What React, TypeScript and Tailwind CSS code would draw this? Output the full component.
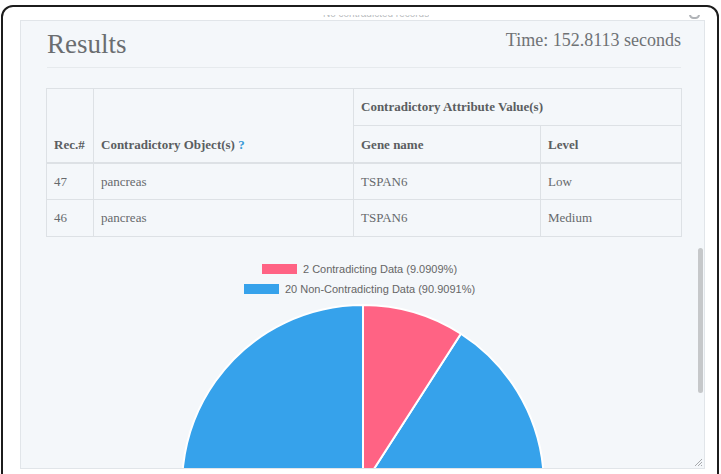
const rows = [
  { rec: '47', obj: 'pancreas', gene: 'TSPAN6', level: 'Low' },
  { rec: '46', obj: 'pancreas', gene: 'TSPAN6', level: 'Medium' },
]

const legend = [
  { color: 'bg-[#ff6384]', label: '2 Contradicting Data (9.0909%)' },
  { color: 'bg-[#36a2eb]', label: '20 Non-Contradicting Data (90.9091%)' },
]

// pie geometry, px inside the svg box
const CX = 317
const CY = 186
const R = 181
const share = 2 / 22

function slicePath(from: number, to: number) {
  const a0 = from * Math.PI * 2
  const a1 = to * Math.PI * 2
  const x0 = CX + R * Math.sin(a0)
  const y0 = CY - R * Math.cos(a0)
  const x1 = CX + R * Math.sin(a1)
  const y1 = CY - R * Math.cos(a1)
  const large = to - from > 0.5 ? 1 : 0
  return `M${CX},${CY} L${x0},${y0} A${R},${R} 0 ${large} 1 ${x1},${y1} Z`
}

export default function App() {
  return (
    <div className="w-[721px] h-[474px] overflow-hidden bg-white">
      <div className="ml-[1px] mt-[5px] w-[718px] h-[500px] rounded-[12px] border-2 border-[#1c1c1c] bg-white">
        {/* cut-off bits from the page above the panel */}
        <div className="relative h-[13px] overflow-hidden">
          <div className="absolute left-[320px] top-[8px] h-[4px] overflow-hidden">
            <p className="-mt-[6px] text-[10px] leading-[10px] text-[#b9bcc0] font-['Liberation_Sans',sans-serif]">
              No contradicted records
            </p>
          </div>
          <div className="absolute left-[686px] top-[8px] h-[5px] w-[12px] overflow-hidden">
            <div className="-mt-[5px] h-[9px] w-[11px] rounded-full border-2 border-[#b0b3b7]" />
          </div>
        </div>

        <div className="relative ml-[17px] w-[685px] h-[449px] overflow-hidden border border-[#e1e5e9] bg-[#f4f7fa] pl-[26px] pr-[23px] pt-[7px]">
          <div className="flex items-start justify-between">
            <h1 className="text-[27px] leading-[32px] text-[#6a6d70] font-['Liberation_Serif',serif]">Results</h1>
            <p className="text-[18px] leading-[24px] text-[#6f7275] font-['Liberation_Serif',serif]">
              Time: 152.8113 seconds
            </p>
          </div>
          <div className="mt-[7px] h-px bg-[#e6eaed]" />

          <table className="mt-[20px] ml-[-1px] w-[635px] table-fixed border-collapse font-['Liberation_Serif',serif] text-[13px]">
            <colgroup>
              <col className="w-[47px]" />
              <col className="w-[260px]" />
              <col className="w-[187px]" />
              <col className="w-[141px]" />
            </colgroup>
            <thead className="text-[#5b5e61] font-bold">
              <tr className="h-[37px]">
                <th rowSpan={2} className="border border-b-2 border-[#dde1e5] px-[7px] pb-[7px] text-left align-bottom">
                  Rec.#
                </th>
                <th rowSpan={2} className="border border-b-2 border-[#dde1e5] px-[7px] pb-[7px] text-left align-bottom">
                  Contradictory Object(s) <span className="text-[#3b9bd8]">?</span>
                </th>
                <th colSpan={2} className="border border-[#dde1e5] px-[7px] text-left align-middle">
                  Contradictory Attribute Value(s)
                </th>
              </tr>
              <tr className="h-[37px]">
                <th className="border border-b-2 border-[#dde1e5] px-[7px] pt-[2px] text-left align-middle">Gene name</th>
                <th className="border border-b-2 border-[#dde1e5] px-[7px] pt-[2px] text-left align-middle">Level</th>
              </tr>
            </thead>
            <tbody className="text-[#66696c]">
              {rows.map((r) => (
                <tr key={r.rec} className="h-[37px]">
                  <td className="border border-[#dde1e5] px-[7px]">{r.rec}</td>
                  <td className="border border-[#dde1e5] px-[7px]">{r.obj}</td>
                  <td className="border border-[#dde1e5] px-[7px]">{r.gene}</td>
                  <td className="border border-[#dde1e5] px-[7px]">{r.level}</td>
                </tr>
              ))}
            </tbody>
          </table>

          <div className="mt-[26px] ml-[-1px] w-[635px] flex flex-col items-center gap-[8px] pr-[8px] font-['Liberation_Sans',sans-serif] text-[11px] leading-[12px] text-[#666]">
            {legend.map((l) => (
              <div key={l.label} className="flex items-center gap-[6px]">
                <span className={`h-[10px] w-[35px] ${l.color}`} />
                <span>{l.label}</span>
              </div>
            ))}
          </div>

          <svg width="635" height="220" className="ml-[-1px] mt-[5px] block">
            <path d={slicePath(share, 1)} fill="#36a2eb" stroke="#fff" strokeWidth="2" />
            <path d={slicePath(0, share)} fill="#ff6384" stroke="#fff" strokeWidth="2" />
          </svg>

          {/* scrollbar thumb + resize grip */}
          <div className="absolute left-[677px] top-[227px] h-[145px] w-[5px] rounded-full bg-[#c6c8ca]" />
          <svg width="10" height="10" className="absolute right-[1px] bottom-[1px]">
            <path d="M9 2 L2 9 M9 5 L5 9 M9 8 L8 9" stroke="#a8aaad" strokeWidth="1" />
          </svg>
        </div>
      </div>
    </div>
  )
}
